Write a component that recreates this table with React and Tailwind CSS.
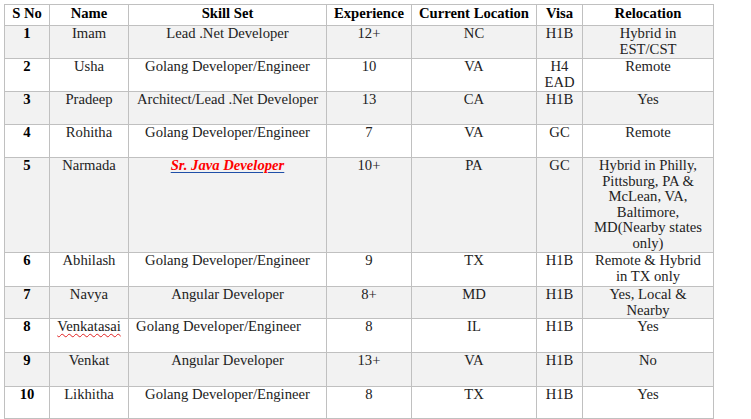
const rows = [
  { no: '1', name: 'Imam', skill: 'Lead .Net Developer', exp: '12+', loc: 'NC', visa: 'H1B', reloc: 'Hybrid in EST/CST', h: 'h-[33px]' },
  { no: '2', name: 'Usha', skill: 'Golang Developer/Engineer', exp: '10', loc: 'VA', visa: 'H4 EAD', reloc: 'Remote', h: 'h-[33px]' },
  { no: '3', name: 'Pradeep', skill: 'Architect/Lead .Net Developer', exp: '13', loc: 'CA', visa: 'H1B', reloc: 'Yes', h: 'h-[33px]' },
  { no: '4', name: 'Rohitha', skill: 'Golang Developer/Engineer', exp: '7', loc: 'VA', visa: 'GC', reloc: 'Remote', h: 'h-[33px]' },
  {
    no: '5',
    name: 'Narmada',
    skill: 'java',
    exp: '10+',
    loc: 'PA',
    visa: 'GC',
    reloc: 'Hybrid in Philly, Pittsburg, PA & McLean, VA, Baltimore, MD(Nearby states only)',
    h: 'h-[95px]',
  },
  { no: '6', name: 'Abhilash', skill: 'Golang Developer/Engineer', exp: '9', loc: 'TX', visa: 'H1B', reloc: 'Remote & Hybrid in TX only', h: 'h-[34px]' },
  { no: '7', name: 'Navya', skill: 'Angular Developer', exp: '8+', loc: 'MD', visa: 'H1B', reloc: 'Yes, Local & Nearby', h: 'h-[32px]' },
  { no: '8', name: 'Venkatasai', skill: 'Golang Developer/Engineer', exp: '8', loc: 'IL', visa: 'H1B', reloc: 'Yes', h: 'h-[34px]', shift: true },
  { no: '9', name: 'Venkat', skill: 'Angular Developer', exp: '13+', loc: 'VA', visa: 'H1B', reloc: 'No', h: 'h-[34px]' },
  { no: '10', name: 'Likhitha', skill: 'Golang Developer/Engineer', exp: '8', loc: 'TX', visa: 'H1B', reloc: 'Yes', h: 'h-[32px]' },
];

const cell = 'border border-[#c0c0c0] align-top text-center px-[1px] py-0';
const head = 'border border-[#c0c0c0] align-top text-center px-[1px] pt-[1px] pb-0 font-bold text-black';

export default function App() {
  return (
    <div className="w-[751px] h-[419px] overflow-hidden bg-white p-[4px] [font-family:'Liberation_Serif','Times_New_Roman',serif] text-[14.67px] leading-[15.6px] text-[#222]">
      <table className="table-fixed border-collapse w-[709px]">
        <colgroup>
          <col className="w-[45px]" />
          <col className="w-[79px]" />
          <col className="w-[198px]" />
          <col className="w-[85px]" />
          <col className="w-[125px]" />
          <col className="w-[46px]" />
          <col className="w-[131px]" />
        </colgroup>
        <thead>
          <tr className="h-[21px]">
            <th className={head}>S No</th>
            <th className={head}>Name</th>
            <th className={head}>Skill Set</th>
            <th className={head}>Experience</th>
            <th className={head}>Current Location</th>
            <th className={head}>Visa</th>
            <th className={head}>Relocation</th>
          </tr>
        </thead>
        <tbody>
          {rows.map((r, i) => (
            <tr key={r.no} className={`${r.h} ${i % 2 === 0 ? 'bg-[#f2f2f2]' : 'bg-white'}`}>
              <td className={`${cell} font-bold text-black`}>{r.no}</td>
              <td className={cell}>
                {r.name === 'Venkatasai' ? (
                  <span className="underline decoration-wavy decoration-[#e02020] decoration-1 underline-offset-2">
                    {r.name}
                  </span>
                ) : (
                  r.name
                )}
              </td>
              <td className={`${cell} ${r.shift ? 'pr-[19px]' : ''}`}>
                {r.skill === 'java' ? (
                  <span className="font-bold italic text-[#ff0000] underline decoration-[#1f4fa8] decoration-1 underline-offset-2">
                    Sr. Java Developer
                  </span>
                ) : (
                  r.skill
                )}
              </td>
              <td className={cell}>{r.exp}</td>
              <td className={cell}>{r.loc}</td>
              <td className={cell}>{r.visa}</td>
              <td className={`${cell} px-[8px]`}>{r.reloc}</td>
            </tr>
          ))}
        </tbody>
      </table>
    </div>
  );
}
